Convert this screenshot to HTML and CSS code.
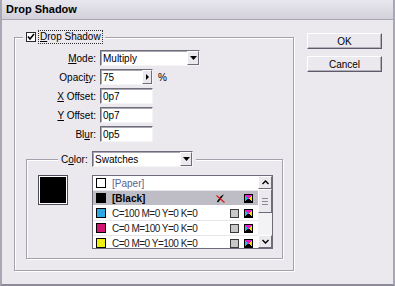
FILE: index.html
```html
<!DOCTYPE html>
<html>

<head>
    <meta charset="UTF-8">
    <title>Drop Shadow</title>
    <link rel="stylesheet" href="styles.css">
</head>

<body>
    <div class="window">
        <div class="titlebar">Drop Shadow</div>
        <div class="content">
            <fieldset class="group main-group">
                <legend class="legend-check">
                    <span class="checkbox">
                        <svg width="8" height="8" viewBox="0 0 8 8"><polyline points="1,3.5 3,6 7,1" fill="none" stroke="#000" stroke-width="1.6"/></svg>
                    </span>
                    <span class="check-label"><u>D</u>rop Shadow</span>
                </legend>

                <div class="fields">
                    <span class="label"><u>M</u>ode:</span>
                    <span class="select mode-select">Multiply<span class="drop-btn"><svg width="7" height="4" viewBox="0 0 7 4"><polygon points="0,0 7,0 3.5,4" fill="#000"/></svg></span></span>

                    <span class="label">Opaci<u>t</u>y:</span>
                    <span class="with-unit">
                        <span class="field spin-field">75<span class="spin-btn"><svg width="3" height="6" viewBox="0 0 3 6"><polygon points="0,0 3,3 0,6" fill="#000"/></svg></span></span>
                        <span class="unit">%</span>
                    </span>

                    <span class="label"><u>X</u> Offset:</span>
                    <span class="field">0p7</span>

                    <span class="label"><u>Y</u> Offset:</span>
                    <span class="field">0p7</span>

                    <span class="label">Bl<u>u</u>r:</span>
                    <span class="field">0p5</span>
                </div>

                <fieldset class="group color-group">
                    <legend class="legend-color">
                        <span class="color-label">C<u>o</u>lor:</span>
                        <span class="select color-select">Swatches<span class="drop-btn"><svg width="7" height="4" viewBox="0 0 7 4"><polygon points="0,0 7,0 3.5,4" fill="#000"/></svg></span></span>
                    </legend>

                    <div class="color-body">
                        <div class="big-swatch"></div>
                        <div class="swatch-list">
                            <ul class="rows">
                                <li class="row">
                                    <span class="chip chip-paper"></span>
                                    <span class="name name-paper">[Paper]</span>
                                    <span class="slot"></span>
                                    <span class="slot"></span>
                                    <span class="slot"></span>
                                </li>
                                <li class="row selected">
                                    <span class="chip chip-black"></span>
                                    <span class="name name-bold">[Black]</span>
                                    <span class="slot">
                                        <svg width="9" height="9" viewBox="0 0 9 9"><line x1="1.5" y1="8" x2="6" y2="2" stroke="#000" stroke-width="1.6"/><line x1="6" y1="2" x2="7.5" y2="1" stroke="#000" stroke-width="1"/><line x1="0.5" y1="1.5" x2="8.5" y2="8.5" stroke="#e01010" stroke-width="1.1"/></svg>
                                    </span>
                                    <span class="slot"></span>
                                    <span class="slot"><span class="cmyk"></span></span>
                                </li>
                                <li class="row">
                                    <span class="chip chip-cyan"></span>
                                    <span class="name">C=100 M=0 Y=0 K=0</span>
                                    <span class="slot"></span>
                                    <span class="slot"><span class="process"></span></span>
                                    <span class="slot"><span class="cmyk"></span></span>
                                </li>
                                <li class="row">
                                    <span class="chip chip-magenta"></span>
                                    <span class="name">C=0 M=100 Y=0 K=0</span>
                                    <span class="slot"></span>
                                    <span class="slot"><span class="process"></span></span>
                                    <span class="slot"><span class="cmyk"></span></span>
                                </li>
                                <li class="row">
                                    <span class="chip chip-yellow"></span>
                                    <span class="name">C=0 M=0 Y=100 K=0</span>
                                    <span class="slot"></span>
                                    <span class="slot"><span class="process"></span></span>
                                    <span class="slot"><span class="cmyk"></span></span>
                                </li>
                            </ul>
                            <div class="scrollbar">
                                <span class="scroll-btn"><svg width="7" height="5" viewBox="0 0 7 5"><polyline points="0.5,4 3.5,1 6.5,4" fill="none" stroke="#000" stroke-width="1.4"/></svg></span>
                                <span class="thumb"><span class="grip"></span></span>
                                <span class="track"></span>
                                <span class="scroll-btn"><svg width="7" height="5" viewBox="0 0 7 5"><polyline points="0.5,1 3.5,4 6.5,1" fill="none" stroke="#000" stroke-width="1.4"/></svg></span>
                            </div>
                        </div>
                    </div>
                </fieldset>
            </fieldset>

            <div class="buttons">
                <span class="button">OK</span>
                <span class="button">Cancel</span>
            </div>
        </div>
    </div>
</body>

</html>
```
FILE: styles.css
```css
body,
ul {
    margin: 0;
    padding: 0;
}

ul {
    list-style-type: none;
}

body {
    font-family: "Liberation Sans", Arial, sans-serif;
    font-size: 10px;
    color: #000;
}

.window {
    width: 395px;
    height: 286px;
    box-sizing: border-box;
    background-color: #ebe8ee;
    border-left: 2px solid #a9a7b4;
    border-right: 2px solid #a9a7b4;
    border-bottom: 2px solid #8d8b99;
}

.titlebar {
    height: 20px;
    box-sizing: border-box;
    padding-left: 4px;
    line-height: 19px;
    font-size: 11px;
    font-weight: bold;
    background: linear-gradient(#e9e7ee, #d2d0d9);
    border-bottom: 1px solid #a8a6b2;
}

.content {
    display: flex;
    gap: 13px;
    padding: 10px 0 0 12px;
}

/* etched group boxes */
.group {
    margin: 0;
    padding: 0;
    border: 1px solid #a3a1ac;
    box-shadow: inset 1px 1px 0 #fff, 1px 1px 0 #fff;
    min-width: 0;
}

.group legend {
    display: flex;
    align-items: center;
    background-color: #ebe8ee;
}

.main-group {
    box-sizing: border-box;
    width: 280px;
    height: 241px;
}

.legend-check {
    height: 14px;
    margin-left: 8px;
    padding: 0 3px;
}

.checkbox {
    width: 10px;
    height: 10px;
    box-sizing: border-box;
    border: 1px solid #2a2a30;
    background-color: #fff;
    display: flex;
    align-items: center;
    justify-content: center;
}

.check-label {
    margin-left: 3px;
    padding: 0 1px;
    outline: 1px dotted #333;
    line-height: 12px;
}

.fields {
    display: grid;
    grid-template-columns: 81px auto;
    grid-auto-rows: 16px;
    column-gap: 4px;
    row-gap: 3px;
    margin-top: 6px;
    align-items: center;
}

.label {
    text-align: right;
}

.field,
.select {
    display: flex;
    align-items: center;
    position: relative;
    box-sizing: border-box;
    height: 16px;
    width: 53px;
    padding-left: 2px;
    background-color: #fff;
    border: 1px solid;
    border-color: #6e6c78 #f4f4f6 #f4f4f6 #6e6c78;
    box-shadow: inset 1px 1px 0 #a9a7b1;
}

.mode-select {
    width: 100px;
}

.drop-btn,
.spin-btn {
    position: absolute;
    right: 0;
    top: 0;
    bottom: 0;
    display: flex;
    align-items: center;
    justify-content: center;
    box-sizing: border-box;
    background-color: #ebe8ee;
    border: 1px solid;
    border-color: #fff #6e6c78 #6e6c78 #fff;
}

.drop-btn {
    width: 12px;
}

.spin-btn {
    width: 10px;
}

.with-unit {
    display: flex;
    align-items: center;
}

.unit {
    margin-left: 5px;
}

.color-group {
    margin: 9px 10px 0 11px;
}

.legend-color {
    height: 16px;
    margin-left: 31px;
    padding: 0 3px;
}

.color-label {
    width: 31px;
}

.color-select {
    width: 101px;
}

.color-body {
    display: flex;
    gap: 24px;
    padding: 8px 9px 9px 11px;
}

.big-swatch {
    width: 30px;
    height: 30px;
    box-sizing: border-box;
    border: 1px solid #4e4c58;
    box-shadow: inset 0 0 0 1px #fff;
    background-color: #000;
}

.swatch-list {
    display: flex;
    box-sizing: border-box;
    width: 181px;
    height: 74px;
    border: 1px solid #6e6c78;
    background-color: #fff;
    overflow: hidden;
}

.rows {
    flex: 1;
}

.row {
    display: flex;
    align-items: center;
    height: 14px;
    padding: 0 5px 0 3px;
    border-bottom: 1px solid #e6e5ea;
    color: #222;
    letter-spacing: -0.5px;
}

.row.selected {
    background-color: #bebdc6;
    border-bottom-color: #fff;
}

.chip {
    width: 10px;
    height: 10px;
    box-sizing: border-box;
    border: 1px solid #000;
}

.chip-paper {
    background-color: #fff;
}

.chip-black {
    background-color: #000;
}

.chip-cyan {
    background-color: #2ea8e2;
}

.chip-magenta {
    background-color: #d21373;
}

.chip-yellow {
    background-color: #eeee10;
}

.name {
    flex: 1;
    margin-left: 6px;
}

.name-paper {
    color: #5a6290;
    letter-spacing: 0;
}

.name-bold {
    font-weight: bold;
    color: #000;
    letter-spacing: 0;
}

.slot {
    width: 9px;
    height: 9px;
    margin-left: 5px;
    display: flex;
}

.process {
    width: 9px;
    height: 9px;
    box-sizing: border-box;
    border: 1px solid #3c3c3c;
    background-color: #c8c8c8;
}

.cmyk {
    width: 9px;
    height: 9px;
    box-sizing: border-box;
    border: 1px solid #000;
    background: conic-gradient(#e020c0 0 45deg, #f0e010 45deg 135deg, #000 135deg 225deg, #18c0e8 225deg 315deg, #e020c0 315deg);
}

.scrollbar {
    display: flex;
    flex-direction: column;
    width: 14px;
    background-color: #f3f2f5;
}

.scroll-btn,
.thumb {
    display: flex;
    align-items: center;
    justify-content: center;
    box-sizing: border-box;
    background-color: #ebe8ee;
    border: 1px solid;
    border-color: #fff #6e6c78 #6e6c78 #fff;
}

.scroll-btn {
    height: 13px;
}

.thumb {
    height: 24px;
}

.grip {
    width: 6px;
    height: 5px;
    border-top: 1px solid #8a8894;
    border-bottom: 1px solid #8a8894;
    background: linear-gradient(transparent 40%, #8a8894 40%, #8a8894 60%, transparent 60%);
}

.track {
    flex: 1;
}

.buttons {
    display: flex;
    flex-direction: column;
    gap: 7px;
    margin-top: 3px;
}

.button {
    width: 75px;
    height: 16px;
    box-sizing: border-box;
    display: flex;
    align-items: center;
    justify-content: center;
    background-color: #ebe8ee;
    border: 1px solid;
    border-color: #fff #5e5c68 #5e5c68 #fff;
    box-shadow: inset -1px -1px 0 #b2b0ba;
}
```
